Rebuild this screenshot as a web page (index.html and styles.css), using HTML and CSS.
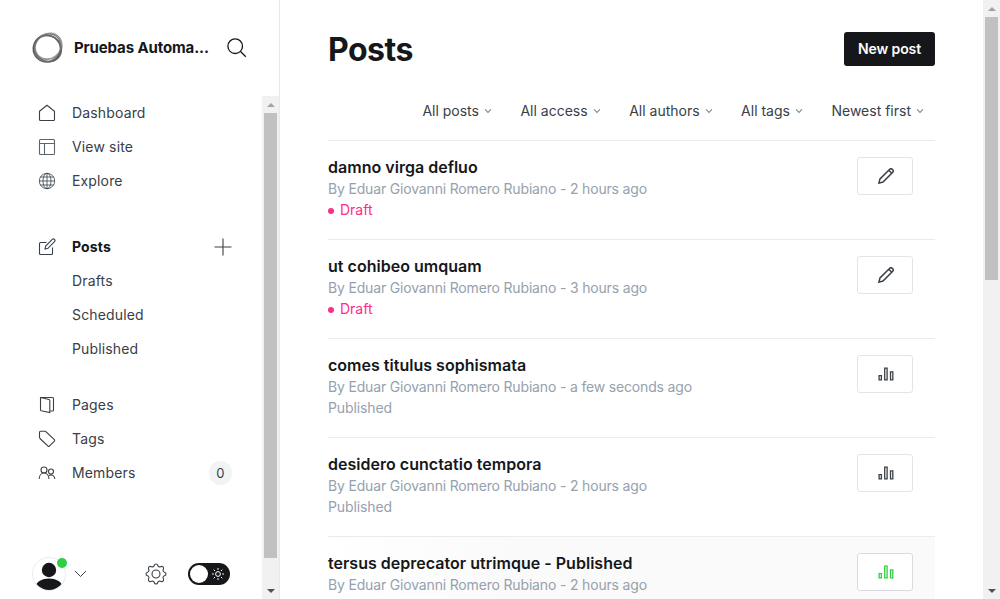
FILE: index.html
```html
<!DOCTYPE html>
<html lang="en">
<head>
<meta charset="utf-8">
<title>Posts</title>
<link rel="stylesheet" href="styles.css">
</head>
<body>
<svg class="defs" width="0" height="0">
  <symbol id="chev" viewBox="0 0 8 6"><path d="M1 1.4 4 4.4 7 1.4"/></symbol>
  <symbol id="pencil" viewBox="0 0 16 16"><path d="M.9 15.100 2 10.900 11.500 1.500a2 2 0 0 1 3 3L5 14zM10.800 2.200l3 3"/></symbol>
  <symbol id="bars" viewBox="0 0 16 14"><path d="M1.100 8.600h2.300v4.300H1.100zM6.700 1.100h2.400v11.800H6.700zM12.500 4.900h2.300v8h-2.300z"/></symbol>
</svg>
<div class="app">
  <aside class="sidebar">
    <header class="site">
      <svg class="logo" width="32" height="32" viewBox="0 0 32 32">
        <ellipse cx="17.200" cy="14.800" rx="13.800" ry="12.400" stroke="#999" stroke-width="2" transform="rotate(-35 16 16)"/>
        <ellipse cx="15" cy="16.700" rx="13.600" ry="13.200" stroke="#555" stroke-width="1.700"/>
        <ellipse cx="16" cy="16.500" rx="14.200" ry="12.700" stroke="#666" stroke-width="1.300" transform="rotate(35 16 16)"/>
        <ellipse cx="16" cy="15.600" rx="14.200" ry="12.600" stroke="#777" stroke-width="1" transform="rotate(-55 16 16)"/>
      </svg>
      <span class="site-name">Pruebas Automa...</span>
      <svg class="search" width="20" height="20" viewBox="0 0 20 20"><circle cx="8.200" cy="8.200" r="7.300"/><path d="m13.500 13.500 5.300 5.200"/></svg>
    </header>
    <div class="side-body">
      <div class="side-content">
        <nav class="nav">
          <a class="item"><svg width="18" height="18" viewBox="0 0 18 18"><path d="M1.500 7.300 9 1.300l7.500 6v8.200a1 1 0 0 1-1 1h-13a1 1 0 0 1-1-1z"/></svg><span class="label">Dashboard</span></a>
          <a class="item"><svg class="soft" width="18" height="18" viewBox="0 0 18 18"><rect x="1.500" y="1.500" width="15" height="15" rx="1"/><path d="M1.500 5.500h15M6.500 5.500v11"/></svg><span class="label">View site</span></a>
          <a class="item"><svg class="thin" width="18" height="18" viewBox="0 0 18 18"><circle cx="9" cy="9" r="7.700"/><ellipse cx="9" cy="9" rx="4" ry="7.700"/><path d="M1.300 9h15.400M9 1.300v15.400M2.300 5h13.400M2.300 13h13.400"/></svg><span class="label">Explore</span></a>
        </nav>
        <nav class="nav">
          <a class="item current"><svg width="18" height="18" viewBox="0 0 18 18"><path d="M8.500 4.500H2.500a1 1 0 0 0-1 1v10a1 1 0 0 0 1 1h11a1 1 0 0 0 1-1V9.500M7 11l.7-3 6.600-6.600a1.500 1.500 0 0 1 2.200 2.200L10 10.300z"/></svg><span class="label">Posts</span><svg class="plus" width="18" height="18" viewBox="0 0 18 18"><path d="M9 .5v17M.5 9h17"/></svg></a>
          <a class="item sub"><span class="label">Drafts</span></a>
          <a class="item sub"><span class="label">Scheduled</span></a>
          <a class="item sub"><span class="label">Published</span></a>
        </nav>
        <nav class="nav">
          <a class="item"><svg width="18" height="18" viewBox="0 0 18 18"><path d="M2.500 1.500h12a1 1 0 0 1 1 1v11.500a1 1 0 0 1-1 1h-2M2.500 1.500 11 3.500a1 1 0 0 1 .8 1v12L3.200 14.700a1 1 0 0 1-.7-1z"/></svg><span class="label">Pages</span></a>
          <a class="item"><svg width="18" height="18" viewBox="0 0 18 18"><path d="M1.500 2.300a1 1 0 0 1 1-1h5l8.900 8.400a1 1 0 0 1 0 1.400l-5 5a1 1 0 0 1-1.400 0L2 8.500a2 2 0 0 1-.5-1.200z"/></svg><span class="label">Tags</span></a>
          <a class="item"><svg width="18" height="18" viewBox="0 0 18 18"><circle cx="6" cy="6" r="3"/><circle cx="13" cy="7.500" r="2.500"/><path d="M1.200 15c0-8 9.800-8 9.800 0M11 11.500c2.700-1.500 5.800 0 5.800 3.500"/></svg><span class="label">Members</span><span class="count">0</span></a>
        </nav>
        <footer class="user">
          <svg class="avatar" width="36" height="36" viewBox="0 0 36 36"><clipPath id="c"><circle cx="17" cy="19" r="16"/></clipPath><circle cx="17" cy="19" r="16.500" fill="#fff" stroke="#e9ebee" stroke-width="1"/><g clip-path="url(#c)" fill="#15171a"><circle cx="17" cy="15" r="7.200"/><ellipse cx="17" cy="31.500" rx="13" ry="8"/></g><circle cx="30" cy="8" r="5" fill="#30cf43"/></svg>
          <svg class="user-chev" width="13" height="8" viewBox="0 0 13 8"><path d="m1 1 5.500 5.500L12 1"/></svg>
          <svg class="gear" width="22" height="22" viewBox="0 0 22 22"><circle cx="11" cy="11" r="4"/><path d="M9.200 2.500c.5-2 3.100-2 3.600 0 .4 1.300 1.600 1.700 2.800 1.200 1.900-1 3.700.8 2.700 2.700-.6 1.200-.1 2.400 1.200 2.800 2 .5 2 3.100 0 3.600-1.300.4-1.800 1.600-1.200 2.800 1 1.900-.8 3.700-2.700 2.700-1.200-.5-2.400-.1-2.800 1.200-.5 2-3.100 2-3.600 0-.4-1.300-1.600-1.700-2.800-1.200-1.900 1-3.700-.8-2.700-2.700.6-1.200.1-2.400-1.200-2.800-2-.5-2-3.100 0-3.600 1.300-.4 1.800-1.600 1.200-2.800-1-1.900.8-3.700 2.700-2.700 1.200.5 2.400.1 2.800-1.200z"/></svg>
          <span class="toggle"><span class="knob"></span><svg class="sun" width="12" height="12" viewBox="0 0 12 12"><circle cx="6" cy="6" r="2.400"/><path d="M6 0v1.800M6 10.200V12M0 6h1.800M10.200 6H12M1.700 1.700 3 3M9 9l1.300 1.300M10.300 1.700 9 3M3 9l-1.300 1.300"/></svg></span>
        </footer>
      </div>
      <div class="scroll side-scroll"><i class="up"></i><b class="thumb"></b><i class="down"></i></div>
    </div>
  </aside>
  <main class="main">
    <header class="head"><h1 class="title">Posts</h1><a class="new">New post</a></header>
    <div class="filters">
      <span class="filter">All posts<svg width="8" height="6"><use href="#chev"/></svg></span>
      <span class="filter">All access<svg width="8" height="6"><use href="#chev"/></svg></span>
      <span class="filter">All authors<svg width="8" height="6"><use href="#chev"/></svg></span>
      <span class="filter">All tags<svg width="8" height="6"><use href="#chev"/></svg></span>
      <span class="filter">Newest first<svg width="8" height="6"><use href="#chev"/></svg></span>
    </div>
    <section class="list">
      <article class="row"><div class="info"><h3 class="name">damno virga defluo</h3><p class="meta">By Eduar Giovanni Romero Rubiano - 2 hours ago</p><p class="state draft">Draft</p></div><a class="btn"><svg width="16" height="16"><use href="#pencil"/></svg></a></article>
      <article class="row"><div class="info"><h3 class="name">ut cohibeo umquam</h3><p class="meta">By Eduar Giovanni Romero Rubiano - 3 hours ago</p><p class="state draft">Draft</p></div><a class="btn"><svg width="16" height="16"><use href="#pencil"/></svg></a></article>
      <article class="row"><div class="info"><h3 class="name">comes titulus sophismata</h3><p class="meta">By Eduar Giovanni Romero Rubiano - a few seconds ago</p><p class="state">Published</p></div><a class="btn"><svg class="stats" width="16" height="14"><use href="#bars"/></svg></a></article>
      <article class="row"><div class="info"><h3 class="name">desidero cunctatio tempora</h3><p class="meta">By Eduar Giovanni Romero Rubiano - 2 hours ago</p><p class="state">Published</p></div><a class="btn"><svg class="stats" width="16" height="14"><use href="#bars"/></svg></a></article>
      <article class="row hover"><div class="info"><h3 class="name">tersus deprecator utrimque - Published</h3><p class="meta">By Eduar Giovanni Romero Rubiano - 2 hours ago</p></div><a class="btn"><svg class="stats" width="16" height="14"><use href="#bars"/></svg></a></article>
    </section>
  </main>
  <div class="scroll main-scroll"><i class="up"></i><b class="thumb"></b><i class="down"></i></div>
</div>
</body>
</html>
```
FILE: styles.css
```css
* { box-sizing: border-box; }
body { margin: 0; background: #fff; color: #15171a; font-family: Inter, "Open Sans", sans-serif; font-size: 14px; overflow: hidden; }
svg { display: block; fill: none; flex: none; }
.defs { position: absolute; }
.app { display: flex; width: 1000px; height: 599px; overflow: hidden; }

.sidebar { width: 280px; flex: none; border-right: 1px solid #e6e9eb; display: flex; flex-direction: column; }
.site { height: 96px; flex: none; display: flex; align-items: center; padding: 0 32px; }
.site-name { margin: -1px 0 0 10px; width: 153px; font-size: 15px; font-weight: 700; letter-spacing: -.12px; white-space: nowrap; }
.search { stroke: #15171a; stroke-width: 1.3; }
.side-body { flex: 1; min-height: 0; display: flex; }
.side-content { flex: 1; display: flex; flex-direction: column; }
.nav { margin-bottom: 32px; }
.nav + .nav + .nav { margin: -10px 0 0; }
.item { display: flex; align-items: center; height: 34px; padding: 0 30px 0 38px; font-size: 14px; font-weight: 400; letter-spacing: .15px; color: #394047; }
.item svg { margin-right: 16px; stroke: #394047; stroke-width: 1.1; }
.label { padding-bottom: 1px; }
.item .soft { stroke: #5d646b; }
.item .thin { stroke-width: .8; }
.item.sub { padding-left: 72px; }
.item.current { font-weight: 700; color: #15171a; }
.item .plus { margin: 0 0 0 auto; stroke: #394047; }
.count { margin-left: auto; min-width: 23px; height: 24px; border-radius: 12px; background: #f1f3f4; font-size: 13px; line-height: 24px; text-align: center; }
.user { margin-top: auto; height: 50px; display: flex; align-items: center; padding-left: 32px; }
.avatar { margin-top: -3px; }
.user-chev { margin-left: 6px; stroke: #394047; }
.gear { margin-left: 58px; stroke: #394047; stroke-width: 1.1; }
.toggle { margin-left: 21px; width: 42px; height: 22px; border-radius: 11px; background: #15171a; display: flex; align-items: center; padding: 2px 6px 2px 2px; justify-content: space-between; }
.knob { width: 18px; height: 18px; border-radius: 50%; background: #fff; }
.sun { stroke: #fff; stroke-width: 1; }

.scroll { width: 17px; flex: none; background: #f1f1f1; display: flex; flex-direction: column; align-items: center; }
.up, .down { height: 17px; width: 17px; display: flex; align-items: center; justify-content: center; }
.up::before, .down::before { content: ""; border: 4px solid transparent; }
.up::before { border-top: 0; border-bottom-color: #a3a3a3; }
.down::before { border-bottom: 0; border-top-color: #505050; }
.down { margin-top: auto; }
.thumb { width: 13px; background: #c1c1c1; }
.side-scroll .thumb { height: 445px; }
.main-scroll .thumb { height: 263px; }

.main { flex: 1; min-width: 0; padding: 0 48px; }
.head { display: flex; justify-content: space-between; align-items: center; height: 98px; }
.title { margin: 2px 0 0; font-size: 32px; font-weight: 700; line-height: 38px; letter-spacing: -.5px; }
.new { width: 91px; height: 34px; border-radius: 3px; background: #15171a; color: #fff; font-weight: 600; line-height: 34px; letter-spacing: -.1px; text-align: center; }
.filters { height: 42px; display: flex; justify-content: flex-end; gap: 28.500px; padding: 3px 11px 0 0; }
.filter { display: flex; height: 18px; align-items: center; gap: 5px; color: #394047; white-space: nowrap; }
.filter svg { margin-top: 1px; stroke: #7c8b9a; stroke-width: 1.1; }
.row { height: 99px; border-top: 1px solid #e9ebec; display: flex; justify-content: space-between; padding: 16px 22px 0 0; }
.name { margin: 0; font-size: 16px; font-weight: 600; line-height: 21px; letter-spacing: .02px; }
.meta, .state { margin: 0; line-height: 21px; color: #95a1ad; }
.meta { letter-spacing: -.17px; }
.state { letter-spacing: -.1px; }
.draft { color: #fb2d8d; letter-spacing: 0; display: flex; align-items: center; gap: 6px; }
.draft::before { content: ""; width: 6px; height: 6px; margin-top: 3px; border-radius: 50%; background: currentColor; }
.btn { width: 56px; height: 38px; border: 1px solid #e2e5e8; border-radius: 3px; background: #fff; display: flex; align-items: center; justify-content: center; }
.btn svg { margin-left: 1px; stroke: #394047; stroke-width: 1.5; }
.btn .stats { margin: -1px 0 0 2px; stroke-width: 1.3; }
.hover { background: linear-gradient(90deg, #fff, #fafafa 30%); }
.hover .btn { border-color: #d9dcde; }
.hover .btn svg { stroke: #30cf43; }
```
